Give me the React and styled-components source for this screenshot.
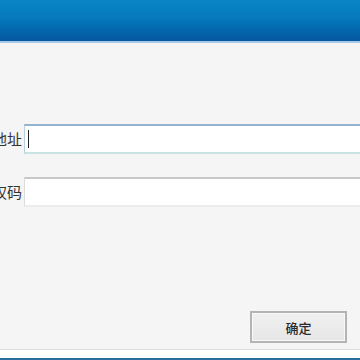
import styled, { createGlobalStyle } from 'styled-components'

const Global = createGlobalStyle`
  html, body {
    margin: 0;
    padding: 0;
    background: #f5f5f5;
  }
  body {
    font-family: "Noto Sans CJK SC", "Noto Sans", sans-serif;
  }
`

const Window = styled.div`
  width: 360px;
  height: 360px;
  overflow: hidden;
  display: flex;
  flex-direction: column;
  background: #f5f5f5;
`

const TitleBar = styled.div`
  height: 41px;
  flex: none;
  background: linear-gradient(to bottom, #0a86c6 0%, #0479bb 45%, #04579e 100%);
  border-bottom: 2px solid #a9c9e6;
`

const Body = styled.div`
  flex: 1;
  display: flex;
  flex-direction: column;
  padding-top: 81px;
`

const Row = styled.div`
  display: flex;
  align-items: center;
  gap: 2px;
  margin-left: -78px;
  margin-bottom: 23px;
`

const Label = styled.label`
  width: 100px;
  flex: none;
  text-align: right;
  font-size: 15px;
  color: #333;
  margin-top: -1px;
`

const Input = styled.div`
  width: 400px;
  height: 26px;
  flex: none;
  background: #fff;
  border: 1px solid ${p => (p.$focused ? '#b7d0e0' : '#dcdcdc')};
  border-top: 2px solid ${p => (p.$focused ? '#93b4d0' : '#c8c8c8')};
  border-bottom: 2px solid ${p => (p.$focused ? '#c8e4e2' : '#ececec')};
  position: relative;
`

const Caret = styled.span`
  position: absolute;
  left: 3px;
  top: 4px;
  width: 1px;
  height: 18px;
  background: #222;
`

const Actions = styled.div`
  margin-top: auto;
  display: flex;
  justify-content: flex-end;
  padding: 0 13px 6px 0;
`

const Button = styled.button`
  width: 97px;
  height: 32px;
  background: linear-gradient(to bottom, #f0f0f0, #e6e6e6);
  border: 2px solid #b4b4b4;
  box-shadow: inset 0 0 0 1px #f8f8f8;
  font-family: "Noto Sans CJK SC", "Noto Sans", sans-serif;
  font-size: 13px;
  font-weight: 500;
  color: #2a2a2a;
  padding: 0;
`

const Footer = styled.div`
  height: 8px;
  flex: none;
  background: #fff;
  border-top: 1px solid #d8dde0;
  border-bottom: 2px solid #2a6e9e;
`

export default function App() {
  return (
    <Window>
      <Global />
      <TitleBar />
      <Body>
        <Row>
          <Label>服务器地址</Label>
          <Input $focused>
            <Caret />
          </Input>
        </Row>
        <Row>
          <Label>授权码</Label>
          <Input />
        </Row>
        <Actions>
          <Button>确定</Button>
        </Actions>
      </Body>
      <Footer />
    </Window>
  )
}
